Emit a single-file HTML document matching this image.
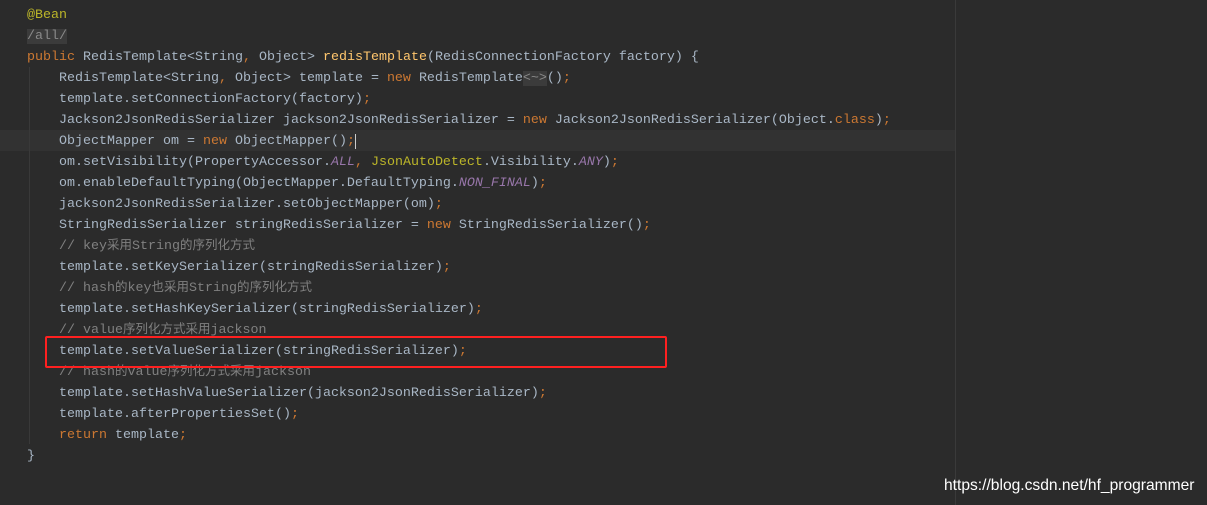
<!DOCTYPE html>
<html><head><meta charset="utf-8"><style>
body{margin:0;width:1207px;height:505px;background:#2b2b2b;overflow:hidden;position:relative;font-family:"Liberation Mono","Noto Sans CJK SC",monospace;font-size:13.33px;color:#a9b7c6}
.l{position:absolute;left:27px;height:21px;line-height:21px;white-space:pre}
.i{left:59px}
.k{color:#cc7832}.a{color:#bbb529}.m{color:#ffc66d}.s{color:#9876aa;font-style:italic}.c{color:#808080}.y{color:#bbb529}
.f{background:#3b3b3b;color:#8a8a8a}
.cj{font-size:12.5px}
</style></head><body>
<div style="position:absolute;left:0;top:130px;width:955px;height:21px;background:#323232"></div>
<div style="position:absolute;left:955px;top:0;width:1px;height:505px;background:#3a3a3a"></div>
<div style="position:absolute;left:29px;top:67px;width:1px;height:377px;background:#393939"></div>
<div class="l" style="top:5px"><span class="a">@Bean</span></div>
<div class="l" style="top:26px"><span class="f">/all/</span></div>
<div class="l" style="top:47px"><span class="k">public </span>RedisTemplate&lt;String<span class="k">, </span>Object&gt; <span class="m">redisTemplate</span>(RedisConnectionFactory factory) {</div>
<div class="l i" style="top:68px">RedisTemplate&lt;String<span class="k">, </span>Object&gt; template = <span class="k">new </span>RedisTemplate<span class="f">&lt;~&gt;</span>()<span class="k">;</span></div>
<div class="l i" style="top:89px">template.setConnectionFactory(factory)<span class="k">;</span></div>
<div class="l i" style="top:110px">Jackson2JsonRedisSerializer jackson2JsonRedisSerializer = <span class="k">new </span>Jackson2JsonRedisSerializer(Object.<span class="k">class</span>)<span class="k">;</span></div>
<div class="l i" style="top:131px">ObjectMapper om = <span class="k">new </span>ObjectMapper()<span class="k">;</span><span style="border-left:1px solid #ccc"></span></div>
<div class="l i" style="top:152px">om.setVisibility(PropertyAccessor.<span class="s">ALL</span><span class="k">, </span><span class="y">JsonAutoDetect</span>.Visibility.<span class="s">ANY</span>)<span class="k">;</span></div>
<div class="l i" style="top:173px">om.enableDefaultTyping(ObjectMapper.DefaultTyping.<span class="s">NON_FINAL</span>)<span class="k">;</span></div>
<div class="l i" style="top:194px">jackson2JsonRedisSerializer.setObjectMapper(om)<span class="k">;</span></div>
<div class="l i" style="top:215px">StringRedisSerializer stringRedisSerializer = <span class="k">new </span>StringRedisSerializer()<span class="k">;</span></div>
<div class="l i c" style="top:236px">// key<span class="cj">采用</span>String<span class="cj">的序列化方式</span></div>
<div class="l i" style="top:257px">template.setKeySerializer(stringRedisSerializer)<span class="k">;</span></div>
<div class="l i c" style="top:278px">// hash<span class="cj">的</span>key<span class="cj">也采用</span>String<span class="cj">的序列化方式</span></div>
<div class="l i" style="top:299px">template.setHashKeySerializer(stringRedisSerializer)<span class="k">;</span></div>
<div class="l i c" style="top:320px">// value<span class="cj">序列化方式采用</span>jackson</div>
<div class="l i" style="top:341px">template.setValueSerializer(stringRedisSerializer)<span class="k">;</span></div>
<div class="l i c" style="top:362px">// hash<span class="cj">的</span>value<span class="cj">序列化方式采用</span>jackson</div>
<div class="l i" style="top:383px">template.setHashValueSerializer(jackson2JsonRedisSerializer)<span class="k">;</span></div>
<div class="l i" style="top:404px">template.afterPropertiesSet()<span class="k">;</span></div>
<div class="l i" style="top:425px"><span class="k">return </span>template<span class="k">;</span></div>
<div class="l" style="top:446px">}</div>
<div style="position:absolute;left:45px;top:336px;width:618px;height:28px;border:2px solid #ff2020;border-radius:2px"></div>
<div style="position:absolute;left:944px;top:477px;font-family:'Liberation Sans',sans-serif;font-size:15.6px;color:#fff">https://blog.csdn.net/hf_programmer</div>
</body></html>
